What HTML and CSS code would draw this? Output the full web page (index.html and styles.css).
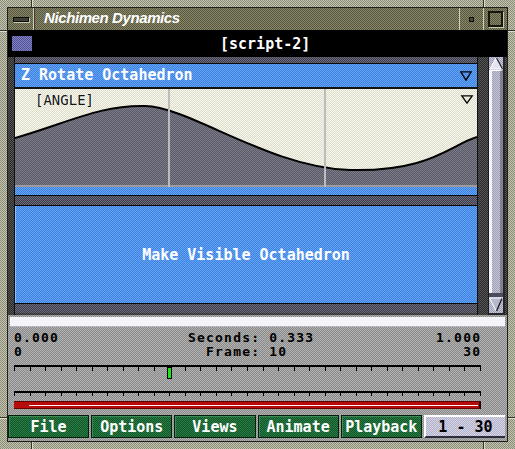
FILE: index.html
```html
<!DOCTYPE html>
<html>
<head>
<meta charset="utf-8">
<link rel="stylesheet" href="styles.css">
</head>
<body>
<div class="window">
  <span class="notch n-t1"></span><span class="notch n-t2"></span>
  <span class="notch n-b1"></span><span class="notch n-b2"></span>
  <span class="notch n-h n-l1"></span><span class="notch n-h n-l2"></span>
  <span class="notch n-h n-r1"></span><span class="notch n-h n-r2"></span>
  <div class="inner">
    <div class="titlebar">
      <div class="tb-menu"><span class="tb-menu-bar"></span></div>
      <div class="tb-title">Nichimen Dynamics</div>
      <div class="tb-btn"><span class="tb-min"></span></div>
      <div class="tb-btn"><span class="tb-max"></span></div>
    </div>
    <div class="scriptbar">
      <span class="sb-icon"></span>
      <span class="sb-title mono">[script-2]</span>
    </div>
    <div class="content">
      <div class="tracks">
        <div class="strip strip-top"></div>
        <div class="track-header mono">
          <span>Z Rotate Octahedron</span>
          <svg class="tri" width="12" height="10" viewBox="0 0 12 10"><polygon points="0.8,0.8 11.2,0.8 6,9.2" fill="none" stroke="#000" stroke-width="1.3"/></svg>
        </div>
        <div class="curve-panel">
          <svg class="curve" width="462" height="98" viewBox="0 0 462 98">
            <defs>
              <pattern id="cream" width="2" height="2" patternUnits="userSpaceOnUse">
                <rect width="2" height="2" fill="#dcdcc8"/>
                <rect width="1" height="1" fill="#f8f8f0"/>
                <rect x="1" y="1" width="1" height="1" fill="#f8f8f0"/>
              </pattern>
              <pattern id="fillp" width="2" height="2" patternUnits="userSpaceOnUse">
                <rect width="2" height="2" fill="#5a5a68"/>
                <rect width="1" height="1" fill="#7c7c88"/>
                <rect x="1" y="1" width="1" height="1" fill="#7c7c88"/>
              </pattern>
            </defs>
            <rect width="462" height="96" fill="url(#cream)"/>
            <path d="M0 49 C55 33 85 16 130 17 S255 79 335 81 S435 56 462 48 L462 96 L0 96 Z" fill="url(#fillp)"/>
            <path d="M0 49 C55 33 85 16 130 17 S255 79 335 81 S435 56 462 48" fill="none" stroke="#000" stroke-width="2"/>
            <rect y="96" width="462" height="2" fill="#9c9c9c"/>
            <rect x="153" width="2" height="98" fill="#bcbcbc"/>
            <rect x="309" width="2" height="98" fill="#bcbcbc"/>
            <polygon points="446.8,6.8 457.2,6.8 452,14.2" fill="none" stroke="#000" stroke-width="1.3"/>
          </svg>
          <span class="curve-label">[ANGLE]</span>
        </div>
        <div class="blue-thin"></div>
        <div class="strip"></div>
        <div class="event mono">Make Visible Octahedron</div>
        <div class="strip strip-bottom"></div>
      </div>
      <div class="vscroll">
        <svg class="vs-up" width="14" height="13" viewBox="0 0 14 13">
          <polygon points="7,1 1,12 13,12" fill="#e4e4ee" stroke="#fff" stroke-width="1"/>
          <line x1="7.5" y1="1" x2="13.5" y2="12" stroke="#1c1c24" stroke-width="1.2"/>
        </svg>
        <div class="vs-track"></div>
        <div class="vs-bar"></div>
        <svg class="vs-down" width="14" height="16" viewBox="0 0 14 16">
          <polygon points="0.5,1 13.5,1 7,14" fill="#b8b8cc" stroke="#fff" stroke-width="1"/>
          <line x1="13" y1="1.5" x2="7.5" y2="14" stroke="#1c1c24" stroke-width="1.4"/>
        </svg>
      </div>
    </div>
    <div class="timeline">
      <div class="hbar"></div>
      <div class="readout mono">
        <div class="ro-row"><span class="ro-left">0.000</span><span class="ro-mid">Seconds: 0.333</span><span class="ro-right">1.000</span></div>
        <div class="ro-row"><span class="ro-left">0</span><span class="ro-mid">  Frame: 10</span><span class="ro-right">30</span></div>
      </div>
      <svg class="ruler ruler-1" width="468" height="15" viewBox="0 0 468 15">
        <rect x="0" y="0" width="467" height="2" fill="#000"/>
        <path d="M0.5 2v4M16.5 2v4M31.5 2v4M47.5 2v4M62.5 2v4M78.5 2v4M93.5 2v4M109.5 2v4M124.5 2v4M140.5 2v4M155.5 2v4M171.5 2v4M186.5 2v4M202.5 2v4M217.5 2v4M233.5 2v4M249.5 2v4M264.5 2v4M280.5 2v4M295.5 2v4M311.5 2v4M326.5 2v4M342.5 2v4M357.5 2v4M373.5 2v4M388.5 2v4M404.5 2v4M419.5 2v4M435.5 2v4M450.5 2v4M466.5 2v4" stroke="#000" stroke-width="1"/>
        <rect x="153.5" y="2.5" width="4" height="11" fill="#18e818" stroke="#000" stroke-width="1"/>
      </svg>
      <svg class="ruler ruler-2" width="468" height="8" viewBox="0 0 468 8">
        <rect x="0" y="1" width="467" height="2" fill="#000"/>
        <path d="M0.5 3v3M16.5 3v3M31.5 3v3M47.5 3v3M62.5 3v3M78.5 3v3M93.5 3v3M109.5 3v3M124.5 3v3M140.5 3v3M155.5 3v3M171.5 3v3M186.5 3v3M202.5 3v3M217.5 3v3M233.5 3v3M249.5 3v3M264.5 3v3M280.5 3v3M295.5 3v3M311.5 3v3M326.5 3v3M342.5 3v3M357.5 3v3M373.5 3v3M388.5 3v3M404.5 3v3M419.5 3v3M435.5 3v3M450.5 3v3M466.5 3v3" stroke="#000" stroke-width="1"/>
      </svg>
      <div class="range"><div class="range-line"></div></div>
      <div class="buttons mono">
        <div class="btn">File</div>
        <div class="btn">Options</div>
        <div class="btn">Views</div>
        <div class="btn">Animate</div>
        <div class="btn">Playback</div>
        <div class="frames">1 - 30</div>
      </div>
    </div>
  </div>
</div>
</body>
</html>
```
FILE: styles.css
```css
html, body {
  margin: 0;
  padding: 0;
}
body {
  width: 515px;
  height: 449px;
  overflow: hidden;
  background: #a6a692;
}
.mono {
  font-family: "DejaVu Sans Mono", "Liberation Mono", monospace;
  font-weight: bold;
  font-size: 15px;
}
.window {
  position: relative;
  width: 515px;
  height: 449px;
  box-sizing: border-box;
  padding: 8px;
  background: repeating-conic-gradient(#c6c6b0 0 25%, #8a8a78 0 50%) 0 0 / 2px 2px;
}
.notch {
  position: absolute;
  background: #34342c;
  width: 1px;
  height: 7px;
  box-shadow: 1px 0 #dcdcc8;
}
.notch.n-h {
  width: 7px;
  height: 1px;
  box-shadow: 0 1px #dcdcc8;
}
.n-t1 { left: 31px; top: 0; }
.n-t2 { left: 483px; top: 0; }
.n-b1 { left: 31px; bottom: 0; }
.n-b2 { left: 483px; bottom: 0; }
.n-l1 { left: 0; top: 30px; }
.n-l2 { left: 0; top: 417px; }
.n-r1 { right: 0; top: 30px; }
.n-r2 { right: 0; top: 417px; }

.inner {
  height: 433px;
  display: flex;
  flex-direction: column;
  box-shadow: 0 0 0 1px #1e1e1a;
}

/* title bar */
.titlebar {
  height: 22px;
  display: flex;
  background: repeating-conic-gradient(#8a8a5e 0 25%, #55554a 0 50%) 0 0 / 2px 2px;
}
.tb-menu {
  width: 25px;
  border-right: 1px solid #d0d0b8;
  box-shadow: 1px 0 #3a3a30;
  display: flex;
  align-items: center;
  justify-content: center;
}
.tb-menu-bar {
  width: 14px;
  height: 3px;
  border: 1px solid #0e0e0a;
  background: #3e3e34;
  box-shadow: 1px 1px #c8c8b0;
}
.tb-title {
  flex: 1;
  padding-left: 10px;
  color: #fff;
  font-family: "Liberation Sans", Arial, sans-serif;
  font-weight: bold;
  font-style: italic;
  font-size: 15px;
  letter-spacing: -0.4px;
  line-height: 20px;
}
.tb-btn {
  width: 23px;
  border-left: 1px solid #d0d0b8;
  display: flex;
  align-items: center;
  justify-content: center;
}
.tb-min {
  width: 3px;
  height: 3px;
  border: 1px solid #0e0e0a;
  background: #4a4a40;
}
.tb-max {
  width: 11px;
  height: 12px;
  border: 2px solid #16160f;
  box-shadow: 1px 1px #c8c8b0;
}

/* script bar */
.scriptbar {
  height: 27px;
  background: #000;
  display: flex;
  align-items: center;
}
.sb-icon {
  margin-left: 4px;
  width: 20px;
  height: 15px;
  background: repeating-conic-gradient(#8282bc 0 25%, #50509c 0 50%) 0 0 / 2px 2px;
}
.sb-title {
  margin-left: 188px;
  color: #fff;
  padding-top: 1px;
}

/* content */
.content {
  height: 258px;
  display: flex;
  background: repeating-conic-gradient(#565656 0 25%, #2a2a2a 0 50%) 0 0 / 2px 2px;
}
.tracks {
  margin-left: 6px;
  width: 462px;
  border-left: 1px solid #101010;
  border-right: 1px solid #101010;
  display: flex;
  flex-direction: column;
  overflow: hidden;
}
.strip {
  height: 9px;
  border-bottom: 1px solid #0a0a0a;
  background: repeating-conic-gradient(#6c6c7c 0 25%, #3c3c4a 0 50%) 0 0 / 2px 2px;
}
.strip-top {
  height: 6px;
}
.strip-bottom {
  height: 9px;
  border-bottom: none;
}
.track-header {
  height: 23px;
  border-bottom: 2px solid #141414;
  background: repeating-conic-gradient(#66a4f4 0 25%, #3c80e2 0 50%) 0 0 / 2px 2px;
  display: flex;
  align-items: center;
  justify-content: space-between;
  padding: 0 5px 0 6px;
  color: #fff;
  line-height: 23px;
}
.tri {
  display: block;
}
.curve-panel {
  position: relative;
  height: 98px;
}
.curve {
  display: block;
}
.curve-label {
  position: absolute;
  left: 20px;
  top: 4px;
  font-family: "DejaVu Sans Mono", "Liberation Mono", monospace;
  font-size: 14px;
  line-height: 14px;
  color: #141414;
  text-shadow: 1px 0 #ffffff;
}
.blue-thin {
  height: 8px;
  border-bottom: 1px solid #0a0a0a;
  background: repeating-conic-gradient(#66a4f4 0 25%, #3c80e2 0 50%) 0 0 / 2px 2px;
}
.event {
  height: 97px;
  border-bottom: 1px solid #0a0a0a;
  background: repeating-conic-gradient(#66a4f4 0 25%, #3c80e2 0 50%) 0 0 / 2px 2px;
  box-shadow: inset 1px 0 #84c0ff;
  color: #fff;
  display: flex;
  align-items: center;
  justify-content: center;
}

/* vertical scrollbar */
.vscroll {
  margin-left: 10px;
  width: 17px;
  box-sizing: border-box;
  border-left: 1px solid #1a1a1a;
  border-right: 2px solid #262626;
  border-bottom: 2px solid #262626;
  display: flex;
  flex-direction: column;
  background: repeating-conic-gradient(#c8c8dc 0 25%, #9c9cb4 0 50%) 0 0 / 2px 2px;
}
.vs-up, .vs-down {
  display: block;
  flex: none;
}
.vs-track {
  flex: 1;
  border-top: 1px solid #ffffff;
  border-left: 3px solid #f2f2f8;
  border-right: 3px solid #80808e;
}
.vs-bar {
  height: 4px;
  background: #4c4c5a;
}

/* timeline */
.timeline {
  height: 126px;
  display: flex;
  flex-direction: column;
  background: repeating-conic-gradient(#b2b2b2 0 25%, #8a8a8a 0 50%) 0 0 / 2px 2px;
}
.hbar {
  margin: 2px 2px 0 2px;
  height: 9px;
  background: #f4f4f8;
  border-bottom: 1px solid #b4b4c4;
}
.readout {
  margin-top: 4px;
  padding: 0 27px 0 6px;
  color: #000;
  font-size: 13px;
  letter-spacing: 1.2px;
  line-height: 14px;
}
.ro-row {
  display: flex;
  height: 14px;
}
.ro-left {
  width: 174px;
}
.ro-mid {
  white-space: pre;
}
.ro-right {
  flex: 1;
  text-align: right;
  margin-right: -1.2px;
}
.ruler {
  display: block;
  margin-left: 6px;
}
.ruler-1 {
  margin-top: 6px;
}
.ruler-2 {
  margin-top: 10px;
}
.range {
  margin: 3px 0 0 6px;
  width: 465px;
  height: 6px;
  background: #b80c0c;
  border-top: 1px solid #5c0000;
  border-bottom: 1px solid #6a0404;
  border-right: 2px solid #1a0000;
  display: flex;
  align-items: center;
}
.range-line {
  margin-left: 15px;
  width: 449px;
  height: 1px;
  background: #fff4f0;
}
.buttons {
  margin-top: 6px;
  height: 23px;
  padding-right: 2px;
  display: flex;
  gap: 2px;
}
.btn {
  flex: 1;
  box-sizing: border-box;
  height: 23px;
  border: 1px solid #06200c;
  box-shadow: inset 1px 1px #3e8a56;
  background: repeating-conic-gradient(#2e7c46 0 25%, #0e5628 0 50%) 0 0 / 2px 2px;
  color: #fff;
  text-align: center;
  line-height: 21px;
  padding-top: 1px;
}
.frames {
  flex: 1;
  box-sizing: border-box;
  height: 23px;
  border-top: 2px solid #ffffff;
  border-left: 2px solid #ffffff;
  border-bottom: 2px solid #2c2c3a;
  background: repeating-conic-gradient(#d6d6e6 0 25%, #b0b0c8 0 50%) 0 0 / 2px 2px;
  color: #000;
  text-align: center;
  line-height: 20px;
}
```
